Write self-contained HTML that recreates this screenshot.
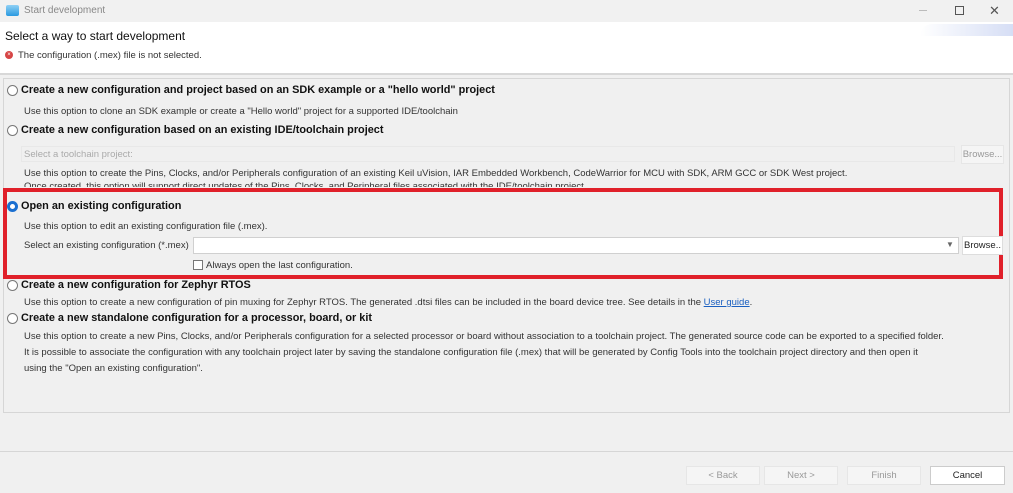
<!DOCTYPE html>
<html><head><meta charset="utf-8"><style>
*{margin:0;padding:0;box-sizing:border-box}
body{width:1013px;height:493px;background:#f0f0f0;font-family:"Liberation Sans",sans-serif;position:relative;overflow:hidden;color:#222}
.a{position:absolute;white-space:nowrap}
.t{font-size:9.5px;color:#333}
.b{font-size:10.9px;font-weight:bold;color:#111}
.r{position:absolute;width:11px;height:11px;border:1px solid #777;border-radius:50%;background:#fff}
.btn{position:absolute;height:19px;background:#f5f5f5;border:1px solid #e6e6e6;font-size:9.5px;color:#999;text-align:center;line-height:17px}
</style></head><body>
<div class="a" style="left:0;top:0;width:1013px;height:22px;background:#f1f1f1"></div>
<div class="a" style="left:6px;top:5px;width:13px;height:11px;background:linear-gradient(#8fd0f5,#2a9ae0);border-radius:2px"></div>
<div class="a" style="left:24px;top:5px;font-size:10px;color:#888">Start development</div>
<div class="a" style="left:919px;top:10px;width:8px;height:1px;background:#bbb"></div>
<div class="a" style="left:955px;top:6px;width:9px;height:9px;border:1px solid #555"></div>
<div class="a" style="left:989px;top:3px;font-size:13px;color:#555">✕</div>
<div class="a" style="left:0;top:22px;width:1013px;height:52px;background:#fff"></div>
<div class="a" style="left:920px;top:24px;width:93px;height:12px;background:linear-gradient(90deg,#fff,#d6def5);border-radius:60px 0 0 0"></div>
<div class="a" style="left:5px;top:29px;font-size:12px;color:#111">Select a way to start development</div>
<div class="a" style="left:5px;top:51px;width:8px;height:8px;border-radius:50%;background:#d64545;color:#fff;font-size:6px;line-height:8px;text-align:center">×</div>
<div class="a t" style="left:18px;top:50px">The configuration (.mex) file is not selected.</div>
<div class="a" style="left:0;top:73px;width:1013px;height:2px;background:#d8d8d8"></div>
<div class="a" style="left:3px;top:78px;width:1007px;height:335px;border:1px solid #d6d6d6"></div>
<div class="a" style="left:0;top:451px;width:1013px;height:1px;background:#d6d6d6"></div>

<div class="r" style="left:7px;top:85px"></div>
<div class="a b" style="left:21px;top:84px">Create a new configuration and project based on an SDK example or a "hello world" project</div>
<div class="a t" style="left:24px;top:106px">Use this option to clone an SDK example or create a "Hello world" project for a supported IDE/toolchain</div>
<div class="r" style="left:7px;top:125px"></div>
<div class="a b" style="left:21px;top:124px">Create a new configuration based on an existing IDE/toolchain project</div>
<div class="a" style="left:21px;top:146px;width:934px;height:16px;background:#f0f0f0;border:1px solid #e8e8e8"></div>
<div class="a t" style="left:24px;top:149px;color:#aaa">Select a toolchain project:</div>
<div class="btn" style="left:961px;top:145px;width:43px">Browse...</div>
<div class="a t" style="left:24px;top:168px">Use this option to create the Pins, Clocks, and/or Peripherals configuration of an existing Keil uVision, IAR Embedded Workbench, CodeWarrior for MCU with SDK, ARM GCC or SDK West project.</div>
<div class="a t" style="left:24px;top:181px;height:6px;overflow:hidden;line-height:12px">Once created, this option will support direct updates of the Pins, Clocks, and Peripheral files associated with the IDE/toolchain project.</div>

<div class="a" style="left:3px;top:188px;width:1000px;height:91px;border:4px solid #e0202a"></div>
<div class="r" style="left:7px;top:201px;border:3px solid #1a6fd0"></div>
<div class="a b" style="left:21px;top:200px">Open an existing configuration</div>
<div class="a t" style="left:24px;top:221px">Use this option to edit an existing configuration file (.mex).</div>
<div class="a t" style="left:24px;top:240px">Select an existing configuration (*.mex)</div>
<div class="a" style="left:193px;top:237px;width:766px;height:17px;background:#fff;border:1px solid #d0d0d0"></div>
<div class="a" style="left:946px;top:240px;font-size:8px;color:#666">▼</div>
<div class="btn" style="left:962px;top:236px;width:41px;background:#fff;color:#222;border-color:#ddd">Browse..</div>
<div class="a" style="left:193px;top:260px;width:10px;height:10px;border:1px solid #777;background:#fff"></div>
<div class="a t" style="left:206px;top:260px">Always open the last configuration.</div>

<div class="r" style="left:7px;top:280px"></div>
<div class="a b" style="left:21px;top:279px">Create a new configuration for Zephyr RTOS</div>
<div class="a t" style="left:24px;top:297px">Use this option to create a new configuration of pin muxing for Zephyr RTOS. The generated .dtsi files can be included in the board device tree. See details in the <span style="color:#1a5fc0;text-decoration:underline">User guide</span>.</div>
<div class="r" style="left:7px;top:313px"></div>
<div class="a b" style="left:21px;top:312px">Create a new standalone configuration for a processor, board, or kit</div>
<div class="a t" style="left:24px;top:331px">Use this option to create a new Pins, Clocks, and/or Peripherals configuration for a selected processor or board without association to a toolchain project. The generated source code can be exported to a specified folder.</div>
<div class="a t" style="left:24px;top:347px">It is possible to associate the configuration with any toolchain project later by saving the standalone configuration file (.mex) that will be generated by Config Tools into the toolchain project directory and then open it</div>
<div class="a t" style="left:24px;top:363px">using the "Open an existing configuration".</div>

<div class="btn" style="left:686px;top:466px;width:74px">&lt; Back</div>
<div class="btn" style="left:764px;top:466px;width:74px">Next &gt;</div>
<div class="btn" style="left:847px;top:466px;width:74px">Finish</div>
<div class="btn" style="left:930px;top:466px;width:75px;background:#fff;color:#222;border-color:#ccc">Cancel</div>
</body></html>
